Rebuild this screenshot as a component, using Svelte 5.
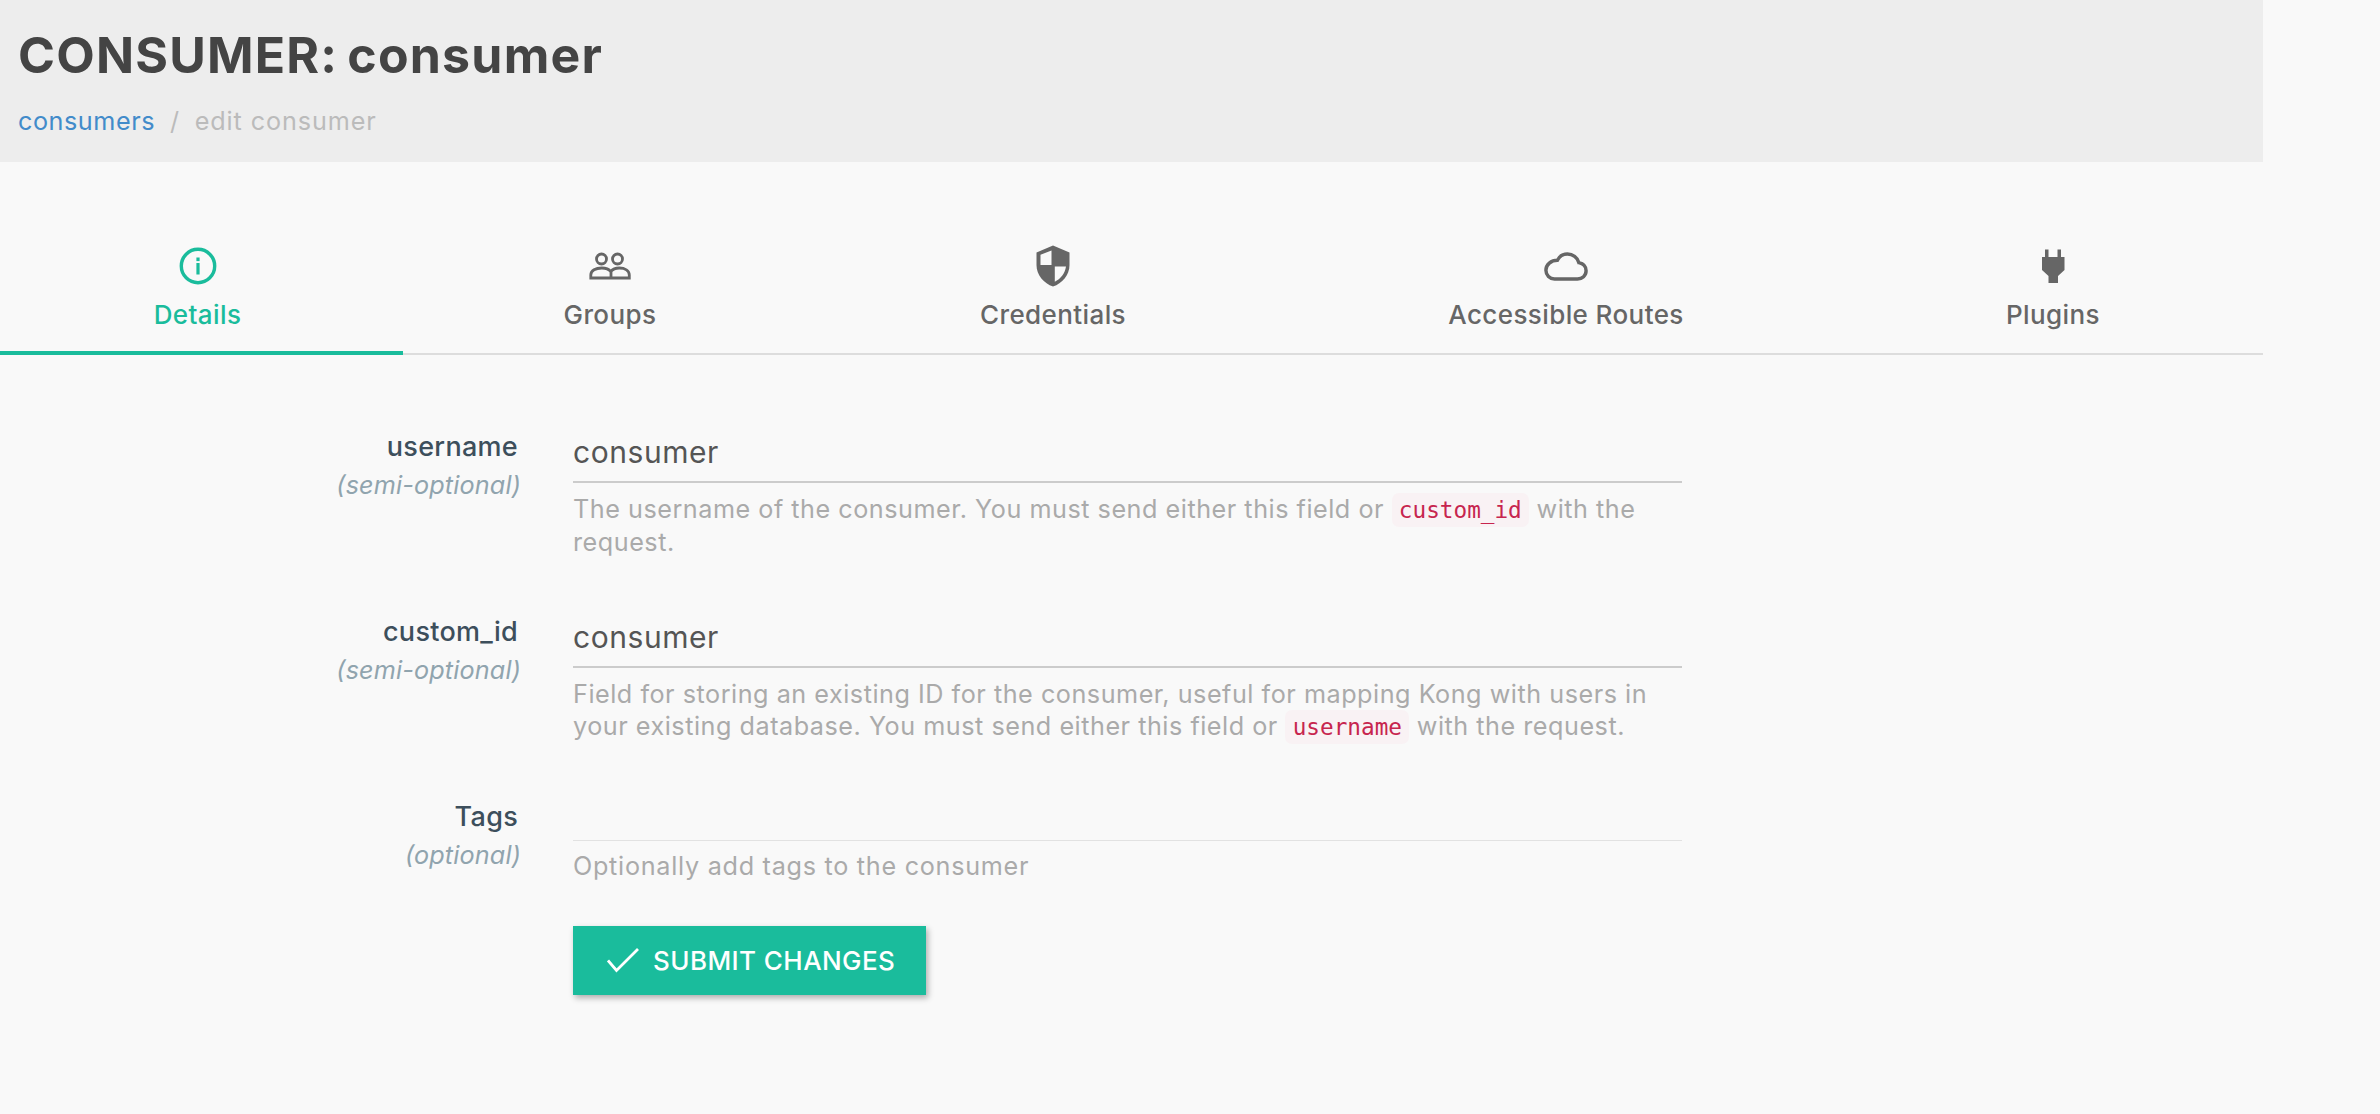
<script>
    const tabs = [
        { label: 'Details', icon: 'info', width: 403 },
        { label: 'Groups', icon: 'groups', width: 414 },
        { label: 'Credentials', icon: 'shield', width: 472 },
        { label: 'Accessible Routes', icon: 'cloud', width: 554 },
        { label: 'Plugins', icon: 'plug', width: 420 }
    ];
    const columns = tabs.map((t) => t.width + 'px').join(' ');
</script>

<div class="page">
    <header class="page-header">
        <h1>CONSUMER: consumer</h1>
        <nav class="crumbs">
            <a href="#consumers">consumers</a>
            <span class="sep">/</span>
            <span class="current">edit consumer</span>
        </nav>
    </header>

    <div class="tabs" style="grid-template-columns: {columns}">
        {#each tabs as tab, i}
            <div class="tab" class:active={i === 0}>
                <div class="icon">
                    {#if tab.icon === 'info'}
                        <svg width="38" height="38" viewBox="0 0 38 38">
                            <circle cx="19" cy="19" r="16.7" fill="none" stroke="currentColor" stroke-width="3.4" />
                            <rect x="17.4" y="10.5" width="3.2" height="3.6" fill="currentColor" />
                            <rect x="17.4" y="16" width="3.2" height="11.5" fill="currentColor" />
                        </svg>
                    {:else if tab.icon === 'groups'}
                        <svg width="42" height="28" viewBox="0 0 42 28" fill="none" stroke="currentColor" stroke-width="2.8">
                            <circle cx="12.5" cy="7" r="5" />
                            <circle cx="28.5" cy="7" r="5" />
                            <path d="M1.8 26v-3c0-4.5 5-7 11-7 4 0 7 1 9 3.500 2-2.500 5-3.500 8.500-3.500 5.500 0 10 2.500 10 7v3z" />
                            <path d="M22 19.500v6.500" />
                        </svg>
                    {:else if tab.icon === 'shield'}
                        <svg width="34" height="42" viewBox="0 0 34 42">
                            <path fill="currentColor" d="M17 0.500 33.500 7.500V20C33.500 30 26 38.500 17 41.500 8 38.500 0.500 30 0.500 20V7.500z" />
                            <path fill="#f9f9f9" d="M15.500 5.500V20H4.500V9.800zM18.800 21.500H30C29 28.500 24.500 34 18.800 36.700z" />
                        </svg>
                    {:else if tab.icon === 'cloud'}
                        <svg width="44" height="29" viewBox="0 0 46 30" fill="none" stroke="currentColor" stroke-width="3.6">
                            <path d="M11 28h24c5 0 9-3.500 9-8.500 0-4.500-3-7.500-7.500-8.500C35 5.500 30 2 24.500 2 19.500 2 16 4.500 14 8.500 7.500 8.500 2 13 2 19c0 5 4 9 9 9z" />
                        </svg>
                    {:else}
                        <svg width="24" height="34" viewBox="0 0 24 34">
                            <path fill="currentColor" d="M4 0.500h3.500V8h9V0.500H20V8h3.500v13L17 27v7H7.500v-7L1 21V8h3z" />
                        </svg>
                    {/if}
                </div>
                <div class="tab-label">{tab.label}</div>
            </div>
        {/each}
    </div>

    <form class="form" on:submit|preventDefault>
        <div class="row">
            <div class="label">
                <div class="name">username</div>
                <div class="hint">(semi-optional)</div>
            </div>
            <div class="field">
                <input type="text" value="consumer" />
                <p class="help">The username of the consumer. You must send either this field or <code>custom_id</code> with the request.</p>
            </div>
        </div>

        <div class="row">
            <div class="label">
                <div class="name">custom_id</div>
                <div class="hint">(semi-optional)</div>
            </div>
            <div class="field">
                <input type="text" value="consumer" />
                <p class="help">Field for storing an existing ID for the consumer, useful for mapping Kong with users in your existing database. You must send either this field or <code>username</code> with the request.</p>
            </div>
        </div>

        <div class="row tags">
            <div class="label">
                <div class="name">Tags</div>
                <div class="hint">(optional)</div>
            </div>
            <div class="field">
                <input type="text" value="" />
                <p class="help">Optionally add tags to the consumer</p>
            </div>
        </div>

        <div class="actions">
            <button type="submit">
                <svg width="32" height="25" viewBox="0 0 32 25" fill="none" stroke="currentColor" stroke-width="2.8">
                    <path d="M1 12.500 9.500 22.500 31 1" />
                </svg>
                SUBMIT CHANGES
            </button>
        </div>
    </form>
</div>

<style>
    :global(body) {
        background: #f9f9f9;
        font-family: Inter, sans-serif;
    }

    .page {
        height: 1114px;
        overflow: hidden;
    }

    .page-header {
        width: 2263px;
        height: 162px;
        box-sizing: border-box;
        background: #ededed;
        padding: 23px 18px 0;
    }

    h1 {
        margin: 0;
        font-size: 50px;
        line-height: 65px;
        font-weight: 700;
        color: #444;
        letter-spacing: 1.2px;
        word-spacing: -4px;
    }

    .crumbs {
        margin-top: 17px;
        display: flex;
        gap: 15px;
        font-size: 25.200px;
        line-height: 32px;
        letter-spacing: 0.55px;
    }

    .crumbs a {
        color: #428bca;
        text-decoration: none;
    }

    .sep,
    .current {
        color: #bbb;
    }

    .current {
        letter-spacing: 0.9px;
    }

    .tabs {
        display: grid;
        width: 2263px;
        margin-top: 82px;
        border-bottom: 2px solid #ddd;
    }

    .tab {
        height: 111px;
        box-sizing: border-box;
        margin-bottom: -2px;
        color: #666;
        text-align: center;
    }

    .tab.active {
        color: #1abc9c;
        border-bottom: 4px solid #1abc9c;
        padding-right: 8px;
    }

    .icon {
        height: 44px;
        display: flex;
        align-items: center;
        justify-content: center;
    }

    .tab-label {
        margin-top: 11px;
        font-size: 26px;
        line-height: 32px;
        font-weight: 500;
        letter-spacing: 0.4px;
    }

    .form {
        margin-top: 68px;
    }

    .row {
        display: grid;
        grid-template-columns: 517px 1109px;
        column-gap: 56px;
        height: 185px;
    }

    .row.tags {
        height: 133px;
    }

    .label {
        padding-top: 7px;
        text-align: right;
    }

    .name {
        margin-right: -1px;
        font-size: 27px;
        line-height: 34px;
        font-weight: 500;
        color: #3d4f5c;
        letter-spacing: 0.3px;
    }

    .hint {
        margin-top: 4px;
        margin-right: -4px;
        font-size: 25.200px;
        line-height: 34px;
        font-style: italic;
        color: #90a4ae;
        letter-spacing: 0.15px;
    }

    input {
        display: block;
        width: 100%;
        box-sizing: border-box;
        height: 60px;
        padding: 0;
        border: none;
        border-bottom: 2px solid #ccc;
        background: transparent;
        font: inherit;
        font-size: 30px;
        letter-spacing: 0.55px;
        color: #555;
        outline: none;
    }

    .tags input {
        height: 48px;
        border-bottom: 1px solid #e2e2e2;
    }

    .help {
        margin: 10px 0 0;
        font-size: 25.200px;
        line-height: 32px;
        color: #aaa;
        letter-spacing: 0.52px;
    }

    .tags .help {
        margin-top: 9px;
        letter-spacing: 0.72px;
    }

    code {
        font-family: "DejaVu Sans Mono", monospace;
        font-size: 22.700px;
        letter-spacing: 0;
        padding: 3.600px 7.200px;
        background: #f9f2f4;
        color: #c7254e;
        border-radius: 7px;
    }

    .actions {
        padding-left: 573px;
    }

    button {
        display: flex;
        align-items: center;
        gap: 14px;
        width: 353px;
        height: 69px;
        padding: 0 0 0 34px;
        border: none;
        background: #1abc9c;
        color: #fff;
        font: inherit;
        font-size: 26px;
        font-weight: 500;
        letter-spacing: 0.43px;
        box-shadow: 2px 3px 6px rgba(0, 0, 0, 0.3);
    }
</style>
